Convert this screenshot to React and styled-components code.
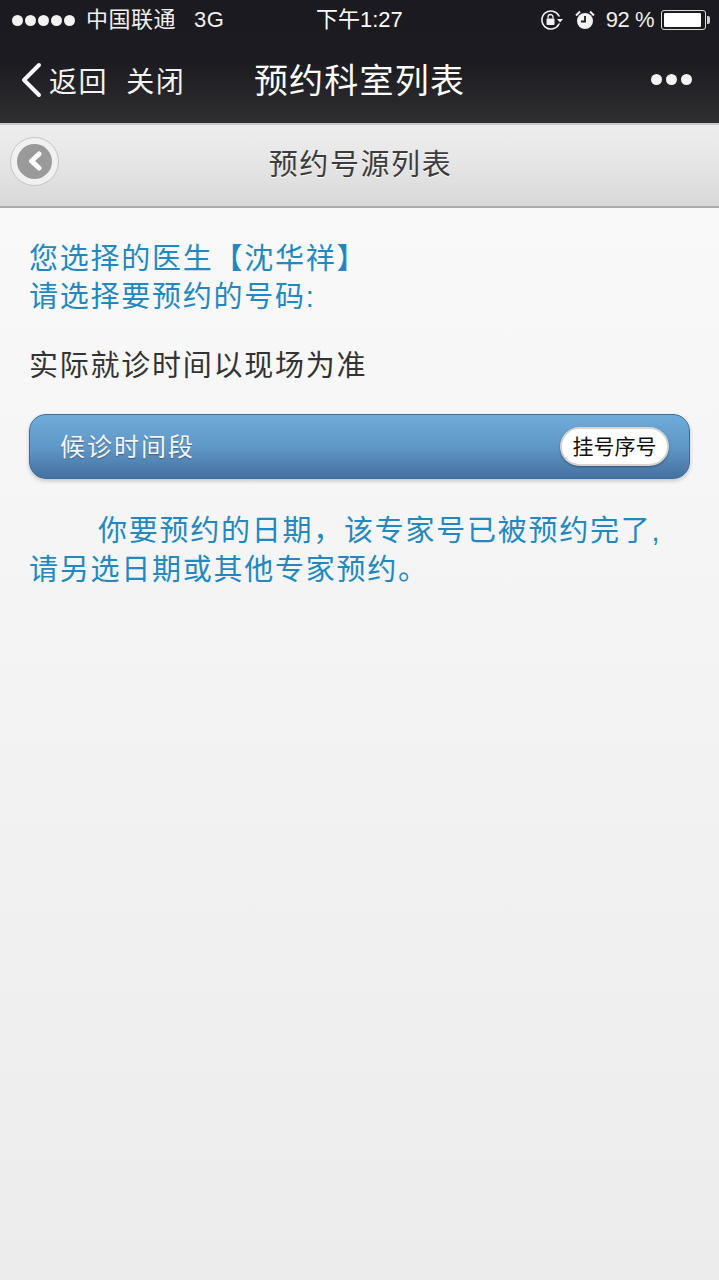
import styled, { createGlobalStyle } from "styled-components";

const GlobalStyle = createGlobalStyle`
  html, body {
    margin: 0;
    padding: 0;
    background: #ececec;
  }
  * {
    box-sizing: border-box;
  }
`;

const FONT = `"Liberation Sans", "Noto Sans CJK SC", sans-serif`;

const Page = styled.div`
  width: 719px;
  height: 1280px;
  display: flex;
  flex-direction: column;
  overflow: hidden;
  font-family: ${FONT};
`;

const Header = styled.div`
  height: 123px;
  background: linear-gradient(to bottom, #1b1a20 0, #1c1b21 62px, #2f2f31 123px);
  color: #fff;
  flex-shrink: 0;
`;

const StatusBar = styled.div`
  height: 40px;
  display: flex;
  align-items: center;
  padding: 0 12px;
  position: relative;
`;

const Signal = styled.div`
  display: flex;
  gap: 2px;
  margin-right: 11px;
`;

const SignalDot = styled.span`
  width: 11px;
  height: 11px;
  border-radius: 50%;
  background: #f2f2f2;
`;

const StatusText = styled.span`
  font-size: 22px;
  line-height: 24px;
  letter-spacing: ${(p) => p.$spacing || 0}px;
  color: #f0f0f0;
  margin-left: ${(p) => p.$gap || 0}px;
  white-space: nowrap;
`;

const StatusCenter = styled.span`
  position: absolute;
  left: 316px;
  font-size: 22px;
  line-height: 24px;
  color: #fff;
  white-space: nowrap;
`;

const StatusRight = styled.div`
  margin-left: auto;
  display: flex;
  align-items: center;
  padding-right: 1px;
`;

const Battery = styled.div`
  width: 45px;
  height: 20px;
  margin-left: 7px;
  border: 1px solid #d8d8d8;
  border-radius: 3px;
  padding: 2px;
  position: relative;
  &::before {
    content: "";
    display: block;
    width: 37px;
    height: 14px;
    background: #fff;
    border-radius: 1px;
  }
  &::after {
    content: "";
    position: absolute;
    right: -5px;
    top: 5px;
    width: 3px;
    height: 8px;
    background: #cfcfcf;
    border-radius: 0 2px 2px 0;
  }
`;

const NavBar = styled.div`
  height: 83px;
  display: flex;
  align-items: center;
  padding: 0 27px 4px 20px;
  position: relative;
`;

const NavLink = styled.span`
  font-size: 28px;
  letter-spacing: 1.6px;
  color: #f2f2f2;
  margin-left: ${(p) => p.$gap}px;
  white-space: nowrap;
`;

const NavTitle = styled.div`
  position: absolute;
  left: 0;
  right: 0;
  top: 17px;
  text-align: center;
  font-size: 34px;
  letter-spacing: 1.2px;
  line-height: 48px;
  color: #fff;
`;

const NavMore = styled.div`
  margin-left: auto;
  display: flex;
  gap: 4px;
`;

const MoreDot = styled.span`
  width: 11px;
  height: 11px;
  border-radius: 50%;
  background: #f4f4f4;
`;

const SubBar = styled.div`
  height: 85px;
  flex-shrink: 0;
  display: flex;
  align-items: center;
  padding: 0 0 9px 10px;
  position: relative;
  background: linear-gradient(to bottom, #ededed 0, #e9e9e9 30%, #d9d9d9 100%);
  border-top: 2px solid #c9c9c9;
  border-bottom: 2px solid #acacac;
`;

const BackRing = styled.div`
  width: 49px;
  height: 49px;
  border-radius: 50%;
  background: #f1f1f1;
  border: 1px solid #c4c4c4;
  display: flex;
  align-items: center;
  justify-content: center;
`;

const BackCircle = styled.div`
  width: 35px;
  height: 35px;
  border-radius: 50%;
  background: #9a9a9a;
  display: flex;
  align-items: center;
  justify-content: center;
`;

const SubTitle = styled.div`
  position: absolute;
  left: 2px;
  right: 0;
  top: 18px;
  text-align: center;
  font-size: 29px;
  letter-spacing: 1.6px;
  line-height: 44px;
  color: #3c3c3c;
  text-shadow: 0 1px 0 #fff;
`;

const Content = styled.div`
  flex: 1;
  padding: 32px 29px 0 29px;
  background: linear-gradient(to bottom, #f9f9f9 0, #ececec 100%);
`;

const Line = styled.div`
  font-size: 29px;
  line-height: 38px;
  letter-spacing: 1.75px;
  white-space: nowrap;
  color: ${(p) => p.$color || "#2388bf"};
  margin-top: ${(p) => p.$top || 0}px;
  padding-left: ${(p) => p.$indent || 0}px;
`;

const Band = styled.div`
  height: 65px;
  margin-top: 29px;
  border-radius: 17px;
  border: 1px solid #3f6c9c;
  background: linear-gradient(to bottom, #6fabd8 0, #5f98c8 50%, #44719f 100%);
  box-shadow: 0 2px 4px rgba(0, 0, 0, 0.2);
  display: flex;
  align-items: center;
  justify-content: space-between;
  padding: 0 20px 0 30px;
`;

const BandLabel = styled.span`
  font-size: 25px;
  line-height: 30px;
  letter-spacing: 2px;
  color: #f6f6f6;
  text-shadow: 0 1px 1px rgba(0, 0, 0, 0.35);
`;

const Pill = styled.span`
  width: 109px;
  height: 39px;
  padding-bottom: 4px;
  border-radius: 20px;
  background: #fff;
  border: 2px solid #d4d4d4;
  box-shadow: 0 1px 2px rgba(0, 0, 0, 0.35);
  display: flex;
  align-items: center;
  justify-content: center;
  font-size: 21px;
  color: #111;
`;

const App = () => {
  return (
    <Page>
      <GlobalStyle />
      <Header>
        <StatusBar>
          <Signal>
            {[0, 1, 2, 3, 4].map((i) => (
              <SignalDot key={i} />
            ))}
          </Signal>
          <StatusText $spacing={0.5}>中国联通</StatusText>
          <StatusText $gap={18} $spacing={0.5}>3G</StatusText>
          <StatusCenter>下午1:27</StatusCenter>
          <StatusRight>
            <svg width="24" height="22" viewBox="0 0 24 22" fill="none">
              <path
                d="M19 15a9 9 0 1 1 0-8"
                stroke="#f2f2f2"
                strokeWidth="1.6"
                strokeLinecap="round"
              />
              <path d="M17 10h6l-3 3.5z" fill="#f2f2f2" />
              <rect x="6.5" y="9.5" width="8" height="6.5" rx="1" fill="#f2f2f2" />
              <path
                d="M8 9.5V8a2.5 2.5 0 0 1 5 0v1.5"
                stroke="#f2f2f2"
                strokeWidth="1.3"
              />
            </svg>
            <svg
              width="22"
              height="22"
              viewBox="0 0 22 22"
              fill="none"
              style={{ marginLeft: 10 }}
            >
              <circle cx="11" cy="12" r="8" fill="#f2f2f2" />
              <path d="M11 7v5.5H7" stroke="#1c1b21" strokeWidth="1.8" />
              <path
                d="M2 6.5 6 2.5M20 6.5l-4-4"
                stroke="#f2f2f2"
                strokeWidth="2"
              />
            </svg>
            <StatusText $gap={10} $spacing={-0.5}>92 %</StatusText>
            <Battery />
          </StatusRight>
        </StatusBar>
        <NavBar>
          <svg width="22" height="36" viewBox="0 0 22 36" fill="none">
            <path
              d="M19 3 4 18l15 15"
              stroke="#f6f6f6"
              strokeWidth="4"
              strokeLinecap="round"
              strokeLinejoin="round"
            />
          </svg>
          <NavLink $gap={7}>返回</NavLink>
          <NavLink $gap={18}>关闭</NavLink>
          <NavTitle>预约科室列表</NavTitle>
          <NavMore>
            {[0, 1, 2].map((i) => (
              <MoreDot key={i} />
            ))}
          </NavMore>
        </NavBar>
      </Header>
      <SubBar>
        <BackRing>
          <BackCircle>
            <svg width="18" height="20" viewBox="0 0 18 20" fill="none">
              <path
                d="M13 3 5.5 10l7.5 7"
                stroke="#fff"
                strokeWidth="5"
                strokeLinecap="round"
                strokeLinejoin="round"
              />
            </svg>
          </BackCircle>
        </BackRing>
        <SubTitle>预约号源列表</SubTitle>
      </SubBar>
      <Content>
        <Line>您选择的医生【沈华祥】</Line>
        <Line>请选择要预约的号码:</Line>
        <Line $color="#333" $top={31}>
          实际就诊时间以现场为准
        </Line>
        <Band>
          <BandLabel>候诊时间段</BandLabel>
          <Pill>挂号序号</Pill>
        </Band>
        <Line $top={33} $indent={69}>
          你要预约的日期，该专家号已被预约完了,
        </Line>
        <Line $top={1}>请另选日期或其他专家预约。</Line>
      </Content>
    </Page>
  );
};

export default App;
